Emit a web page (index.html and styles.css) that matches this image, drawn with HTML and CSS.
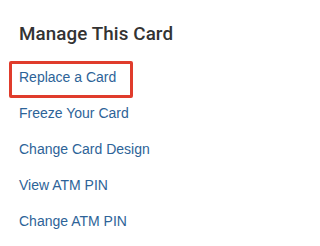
FILE: index.html
```html
<!DOCTYPE html>
<html>
<head>
<meta charset="utf-8">
<link rel="stylesheet" href="styles.css">
</head>
<body>
<section class="panel">
  <h2 class="title">Manage This Card</h2>
  <ul class="actions">
    <li class="action highlighted"><a href="#">Replace a Card</a></li>
    <li class="action"><a href="#">Freeze Your Card</a></li>
    <li class="action"><a href="#">Change Card Design</a></li>
    <li class="action"><a href="#">View ATM PIN</a></li>
    <li class="action"><a href="#">Change ATM PIN</a></li>
  </ul>
</section>
</body>
</html>
```

FILE: styles.css
```css
html, body {
  margin: 0;
  padding: 0;
  background: #ffffff;
}
body {
  font-family: "Liberation Sans", Arial, sans-serif;
}
.panel {
  padding: 23px 0 0 19px;
}
.title {
  margin: 0;
  font-family: Roboto, "Liberation Sans", sans-serif;
  font-size: 18.8px;
  line-height: 22px;
  font-weight: 500;
  color: #333333;
  letter-spacing: 0.1px;
}
.actions {
  list-style: none;
  margin: 14px 0 0 0;
  padding: 0;
}
.action {
  position: relative;
  font-size: 14px;
  line-height: 36px;
  height: 36px;
}
.action a {
  color: #2d6398;
  text-decoration: none;
}
.highlighted::after {
  content: "";
  position: absolute;
  left: -10px;
  top: 2px;
  width: 118px;
  height: 31px;
  border: 3px solid #e03c2c;
  border-radius: 2px;
}
```
